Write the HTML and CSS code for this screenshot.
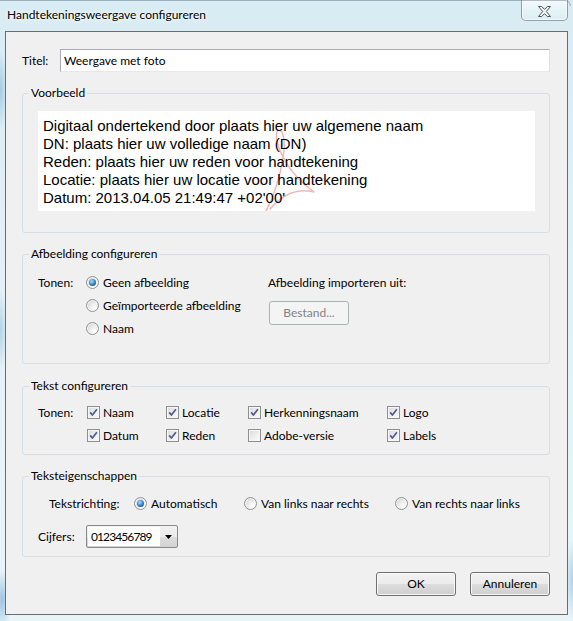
FILE: index.html
```html
<!DOCTYPE html>
<html lang="nl">
<head>
<meta charset="utf-8">
<title>Handtekeningsweergave configureren</title>
<link rel="stylesheet" href="styles.css">
</head>
<body>
<div class="window">
  <div class="frame-top"></div>
  <div class="titlebar">
    <span class="caption">Handtekeningsweergave configureren</span>
    <div class="close">
      <svg class="close-x" width="13" height="11" viewBox="0 0 13 11">
        <polygon points="0.5,0.5 3.7,0.5 6.5,3.4 9.3,0.5 12.5,0.5 8.3,5.5 12.5,10.5 9.3,10.5 6.5,7.6 3.7,10.5 0.5,10.5 4.7,5.5" fill="#f4f6f8" stroke="#4e5561" stroke-width="1" stroke-linejoin="round"/>
      </svg>
    </div>
  </div>
  <div class="client">
    <div class="title-row">
      <span class="lbl-title">Titel:</span>
      <div class="textbox">Weergave met foto</div>
    </div>

    <fieldset class="group">
      <legend>Voorbeeld</legend>
      <div class="g-preview">
        <div class="preview">
          <svg class="watermark" width="70" height="95" viewBox="0 0 70 95">
            <path d="M21 9 C17 9 17 21 25 36 C33 51 43 62 56 71 M21 9 C25 9 28 21 25 36 C22 56 16 76 6 94 M56 71 C40 67 25 73 12 88" fill="none" stroke="#f2b6b6" stroke-width="1.5" stroke-linecap="round"/>
          </svg>
          <div class="pline">Digitaal ondertekend door plaats hier uw algemene naam</div>
          <div class="pline">DN: plaats hier uw volledige naam (DN)</div>
          <div class="pline">Reden: plaats hier uw reden voor handtekening</div>
          <div class="pline">Locatie: plaats hier uw locatie voor handtekening</div>
          <div class="pline">Datum: 2013.04.05 21:49:47 +02'00'</div>
        </div>
      </div>
    </fieldset>

    <fieldset class="group g-image-set">
      <legend>Afbeelding configureren</legend>
      <div class="g-image">
        <span class="tonen-a">Tonen:</span>
        <div class="radio-col">
          <div class="opt-r"><span class="radio on"></span><span class="rl">Geen afbeelding</span></div>
          <div class="opt-r"><span class="radio"></span><span class="rl">Geïmporteerde afbeelding</span></div>
          <div class="opt-r"><span class="radio"></span><span class="rl">Naam</span></div>
        </div>
        <div class="import-col">
          <div class="import-lbl">Afbeelding importeren uit:</div>
          <div class="btn disabled">Bestand...</div>
        </div>
      </div>
    </fieldset>

    <fieldset class="group g-text-set">
      <legend>Tekst configureren</legend>
      <div class="g-text">
        <span class="tonen-t">Tonen:</span>
        <div class="cb-grid">
          <div class="opt-c"><span class="check on"><svg width="11" height="11" viewBox="0 0 11 11"><path d="M2.2 5.4 L4.4 8 L8.9 2.2" fill="none" stroke="#4a5d8f" stroke-width="1.7" stroke-linejoin="round"/></svg></span><span class="cl">Naam</span></div>
          <div class="opt-c"><span class="check on"><svg width="11" height="11" viewBox="0 0 11 11"><path d="M2.2 5.4 L4.4 8 L8.9 2.2" fill="none" stroke="#4a5d8f" stroke-width="1.7" stroke-linejoin="round"/></svg></span><span class="cl">Locatie</span></div>
          <div class="opt-c"><span class="check on"><svg width="11" height="11" viewBox="0 0 11 11"><path d="M2.2 5.4 L4.4 8 L8.9 2.2" fill="none" stroke="#4a5d8f" stroke-width="1.7" stroke-linejoin="round"/></svg></span><span class="cl">Herkenningsnaam</span></div>
          <div class="opt-c"><span class="check on"><svg width="11" height="11" viewBox="0 0 11 11"><path d="M2.2 5.4 L4.4 8 L8.9 2.2" fill="none" stroke="#4a5d8f" stroke-width="1.7" stroke-linejoin="round"/></svg></span><span class="cl">Logo</span></div>
          <div class="opt-c"><span class="check on"><svg width="11" height="11" viewBox="0 0 11 11"><path d="M2.2 5.4 L4.4 8 L8.9 2.2" fill="none" stroke="#4a5d8f" stroke-width="1.7" stroke-linejoin="round"/></svg></span><span class="cl">Datum</span></div>
          <div class="opt-c"><span class="check on"><svg width="11" height="11" viewBox="0 0 11 11"><path d="M2.2 5.4 L4.4 8 L8.9 2.2" fill="none" stroke="#4a5d8f" stroke-width="1.7" stroke-linejoin="round"/></svg></span><span class="cl">Reden</span></div>
          <div class="opt-c"><span class="check"></span><span class="cl">Adobe-versie</span></div>
          <div class="opt-c"><span class="check on"><svg width="11" height="11" viewBox="0 0 11 11"><path d="M2.2 5.4 L4.4 8 L8.9 2.2" fill="none" stroke="#4a5d8f" stroke-width="1.7" stroke-linejoin="round"/></svg></span><span class="cl">Labels</span></div>
        </div>
      </div>
    </fieldset>

    <fieldset class="group g-props-set">
      <legend>Teksteigenschappen</legend>
      <div class="g-props">
        <div class="dir-row">
          <span class="lbl-dir">Tekstrichting:</span>
          <div class="opt-d w1"><span class="radio on"></span><span class="rl">Automatisch</span></div>
          <div class="opt-d w2"><span class="radio"></span><span class="rl">Van links naar rechts</span></div>
          <div class="opt-d"><span class="radio"></span><span class="rl">Van rechts naar links</span></div>
        </div>
        <div class="digit-row">
          <span class="lbl-dig">Cijfers:</span>
          <div class="combo">
            <div class="combo-field">0123456789</div>
            <div class="combo-btn"><svg width="7" height="4" viewBox="0 0 7 4"><polygon points="0,0 7,0 3.5,4" fill="#000"/></svg></div>
          </div>
        </div>
      </div>
    </fieldset>

    <div class="buttons">
      <div class="btn">OK</div>
      <div class="btn">Annuleren</div>
    </div>
  </div>
</div>
</body>
</html>
```

FILE: styles.css
```css
* { box-sizing: border-box; }
html, body { margin: 0; padding: 0; }
body {
  width: 573px;
  height: 621px;
  overflow: hidden;
  font-family: Lato, "Liberation Sans", sans-serif;
  font-size: 12px;
  color: #000;
  background:
    radial-gradient(ellipse 8px 40px at 0 90px, rgba(120,170,210,.55), rgba(120,170,210,0)),
    radial-gradient(ellipse 8px 40px at 0 330px, rgba(120,170,210,.45), rgba(120,170,210,0)),
    radial-gradient(ellipse 10px 30px at 2px 600px, rgba(110,165,210,.6), rgba(110,165,210,0)),
    radial-gradient(ellipse 8px 40px at 573px 580px, rgba(120,170,210,.5), rgba(120,170,210,0)),
    linear-gradient(180deg, #d8ecf3 0%, #e3f1f6 45%, #e8f5f8 100%);
}
.window {
  width: 573px;
  height: 621px;
  display: flex;
  flex-direction: column;
  padding: 0 5px 6px 5px;
  position: relative;
}
.frame-top {
  position: absolute;
  left: 0;
  right: 2px;
  top: 0;
  height: 6px;
  border-top: 1px solid rgba(90,110,125,.45);
  border-right: 1px solid rgba(90,110,125,.45);
  border-top-right-radius: 6px;
}
.titlebar {
  height: 31px;
  display: flex;
  justify-content: space-between;
  align-items: flex-start;
}
.caption {
  margin: 7px 0 0 2px;
  line-height: 16px;
  text-shadow: 0 0 6px #fff, 0 0 3px #fff;
}
.close {
  width: 47px;
  height: 21px;
  border: 1px solid rgba(70,85,100,.55);
  border-top: none;
  border-radius: 0 0 5px 5px;
  background: linear-gradient(180deg, rgba(255,255,255,.75) 0%, rgba(240,250,252,.5) 50%, rgba(225,242,246,.45) 100%);
  box-shadow: inset 0 0 0 1px rgba(255,255,255,.6);
  display: flex;
  align-items: center;
  justify-content: center;
  padding-top: 2px;
}
.client {
  flex: 1;
  border: 1px solid #6c6c6c;
  background: #f0f0f0;
  padding: 0 17px 0 16px;
  display: flex;
  flex-direction: column;
}
.title-row {
  margin-top: 17px;
  height: 23px;
  display: flex;
  align-items: center;
}
.lbl-title { width: 38px; }
.textbox {
  flex: 1;
  height: 23px;
  border: 1px solid;
  border-color: #abadb3 #dbdfe6 #e3e9ef #a9abb1;
  background: #fff;
  padding-left: 3px;
  line-height: 21px;
}
.group {
  margin: 13px 0 0 0;
  padding: 0;
  border: 1px solid #d5dfe5;
  border-radius: 3px;
  min-width: 0;
}
.group legend {
  margin-left: 6px;
  padding: 0 2px;
  line-height: 16px;
}
.g-text-set { margin-top: 14px; }
.g-preview {
  padding: 10px 14px 21px 15px;
}
.preview {
  position: relative;
  height: 100px;
  background: #fff;
  padding: 6px 0 0 5px;
  overflow: hidden;
  font-family: "Liberation Sans", Arial, sans-serif;
  font-size: 15px;
  line-height: 18px;
}
.watermark {
  position: absolute;
  left: 220px;
  top: 10px;
}
.pline { position: relative; white-space: nowrap; }

.g-image {
  display: flex;
  padding: 9px 0 23px 15px;
}
.tonen-a { width: 48px; line-height: 23px; }
.radio-col { width: 182px; display: flex; flex-direction: column; }
.opt-r { height: 23px; display: flex; align-items: center; }
.radio {
  flex: none;
  width: 13px;
  height: 13px;
  border-radius: 50%;
  border: 1px solid #8f9396;
  background: radial-gradient(circle at 70% 72%, #ffffff 0%, #f0f0f0 35%, #d2d2d2 85%);
  box-shadow: inset 0 0 0 1px rgba(255,255,255,.7);
  display: flex;
  align-items: center;
  justify-content: center;
}
.radio.on::after {
  content: "";
  width: 7px;
  height: 7px;
  border-radius: 50%;
  background: radial-gradient(circle at 40% 35%, #a8e2ff 0%, #3f8fcf 45%, #1b4f80 80%, #123a60 100%);
}
.rl { margin-left: 4px; white-space: nowrap; }
.import-col { display: flex; flex-direction: column; align-items: flex-start; }
.import-lbl { line-height: 23px; }
.btn {
  width: 80px;
  height: 24px;
  border: 1px solid #707070;
  border-radius: 3px;
  background: linear-gradient(180deg, #f2f2f2 0%, #ebebeb 50%, #dddddd 51%, #cfcfcf 100%);
  box-shadow: inset 0 0 0 1px rgba(252,252,252,.85);
  display: flex;
  align-items: center;
  justify-content: center;
  line-height: 16px;
}
.btn.disabled {
  margin-top: 7px;
  margin-left: 1px;
  border-color: #adb2b5;
  background: #f4f4f4;
  box-shadow: none;
  color: #838383;
}

.g-text {
  display: flex;
  padding: 7px 0 7px 15px;
}
.tonen-t { width: 49px; line-height: 23px; }
.cb-grid {
  display: grid;
  grid-template-columns: 79px 82px 139px auto;
  grid-auto-rows: 23px;
}
.opt-c { display: flex; align-items: center; }
.check {
  flex: none;
  width: 13px;
  height: 13px;
  border: 1px solid #8e8f8f;
  background: linear-gradient(135deg, #d9dadc 0%, #f0f0f1 60%, #fbfbfb 100%);
  box-shadow: inset 0 0 0 1px #f6f6f6;
  display: flex;
  align-items: center;
  justify-content: center;
}
.check svg { display: block; }
.cl { margin-left: 3px; white-space: nowrap; }

.g-props { padding: 8px 0 8px 15px; }
.dir-row { display: flex; align-items: center; height: 22px; }
.lbl-dir { width: 96px; padding-left: 11px; }
.opt-d { display: flex; align-items: center; }
.opt-d.w1 { width: 110px; }
.opt-d.w2 { width: 151px; }
.digit-row { display: flex; align-items: center; margin-top: 11px; }
.lbl-dig { width: 48px; }
.combo {
  width: 92px;
  height: 23px;
  border: 1px solid #8a8a8a;
  border-radius: 2px;
  background: linear-gradient(180deg, #f2f2f2 0%, #ebebeb 50%, #dddddd 51%, #d3d3d3 100%);
  display: flex;
  padding: 1px;
}
.combo-field {
  width: 72px;
  background: #fff;
  padding-left: 3px;
  line-height: 19px;
  letter-spacing: -0.9px;
  white-space: nowrap;
  overflow: hidden;
}
.combo-btn {
  flex: 1;
  display: flex;
  align-items: center;
  justify-content: center;
  padding-top: 1px;
}
.combo-btn svg { display: block; }

.buttons {
  display: flex;
  justify-content: flex-end;
  gap: 14px;
  margin-top: 15px;
}
```
